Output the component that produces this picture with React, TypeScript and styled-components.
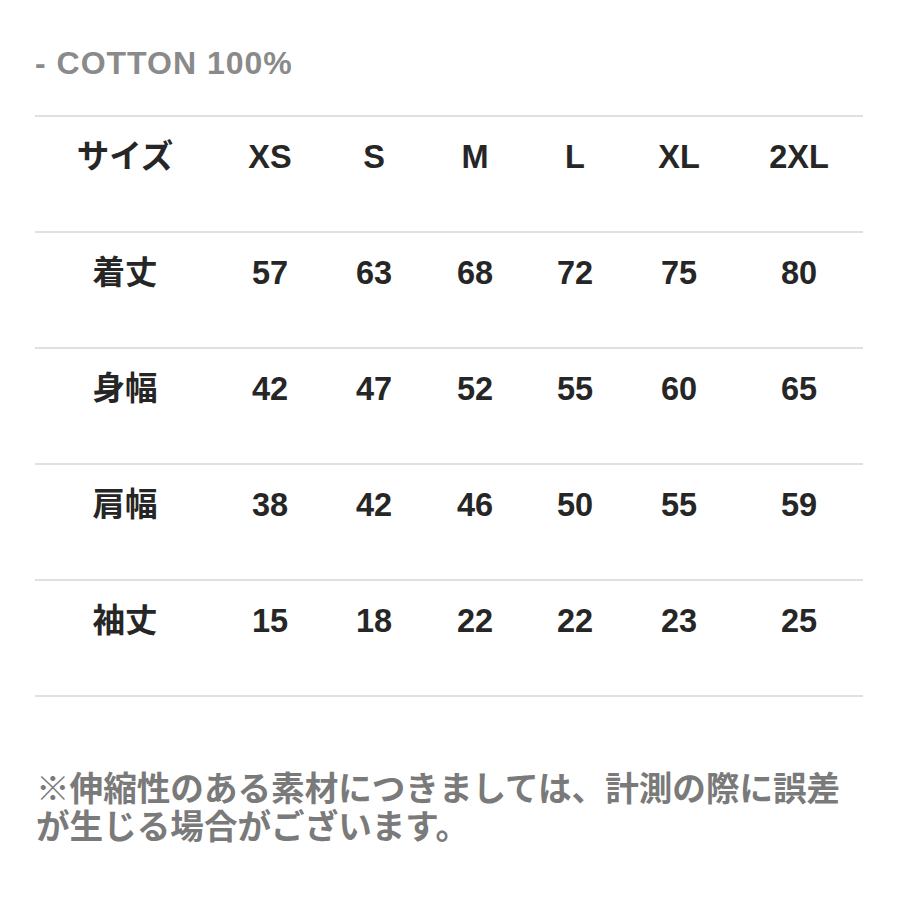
import styled, { createGlobalStyle } from "styled-components"

const GlobalStyle = createGlobalStyle`
    body {
        margin: 0;
        background: #ffffff;
        font-family: "Liberation Sans", "Noto Sans CJK JP", sans-serif;
    }
`

const Page = styled.div`
    box-sizing: border-box;
    width: 900px;
    height: 900px;
    padding: 45px 0 0 35px;
    display: flex;
    flex-direction: column;
`

const Material = styled.div`
    font-size: 32px;
    line-height: 36px;
    font-weight: 700;
    letter-spacing: 1px;
    color: #8a8a8a;
    margin-bottom: 34px;
`

const SizeTable = styled.div`
    width: 828px;
    display: flex;
    flex-direction: column;
    border-bottom: 2px solid #e0e0e0;
`

const Row = styled.div`
    box-sizing: border-box;
    height: 116px;
    display: grid;
    grid-template-columns: 180px 110px 98px 104px 96px 112px 128px;
    align-items: start;
    padding-top: 21px;
    border-top: 2px solid #e0e0e0;
`

const Cell = styled.div`
    text-align: center;
    font-size: 32.5px;
    line-height: 38px;
    font-weight: 700;
    color: #262626;
`

const Note = styled.p`
    margin: 74px 0 0 1px;
    width: 824px;
    font-size: 33.6px;
    line-height: 38px;
    font-weight: 700;
    color: #7a7a7a;
`

const header = ["サイズ", "XS", "S", "M", "L", "XL", "2XL"]

const rows: [string, number[]][] = [
    ["着丈", [57, 63, 68, 72, 75, 80]],
    ["身幅", [42, 47, 52, 55, 60, 65]],
    ["肩幅", [38, 42, 46, 50, 55, 59]],
    ["袖丈", [15, 18, 22, 22, 23, 25]],
]

function App() {
    return (
        <Page>
            <GlobalStyle />
            <Material>- COTTON 100%</Material>
            <SizeTable>
                <Row>
                    {header.map((h) => (
                        <Cell key={h}>{h}</Cell>
                    ))}
                </Row>
                {rows.map(([label, values]) => (
                    <Row key={label}>
                        <Cell>{label}</Cell>
                        {values.map((v, i) => (
                            <Cell key={i}>{v}</Cell>
                        ))}
                    </Row>
                ))}
            </SizeTable>
            <Note>
                ※伸縮性のある素材につきましては、計測の際に誤差
                <br />
                が生じる場合がございます。
            </Note>
        </Page>
    )
}

export default App
